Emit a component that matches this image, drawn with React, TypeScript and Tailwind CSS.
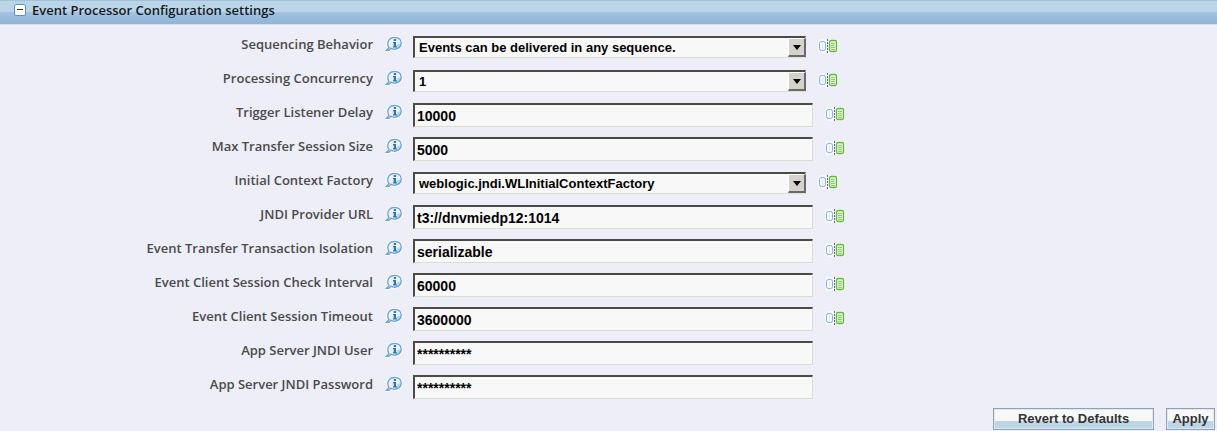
import React, { useState } from "react";

interface Setting {
  id: string;
  label: string;
  value: string;
  type: "select" | "text" | "password";
}

const settings: Setting[] = [
  { id: "sequencing", label: "Sequencing Behavior", value: "Events can be delivered in any sequence.", type: "select" },
  { id: "concurrency", label: "Processing Concurrency", value: "1", type: "select" },
  { id: "delay", label: "Trigger Listener Delay", value: "10000", type: "text" },
  { id: "sessionSize", label: "Max Transfer Session Size", value: "5000", type: "text" },
  { id: "contextFactory", label: "Initial Context Factory", value: "weblogic.jndi.WLInitialContextFactory", type: "select" },
  { id: "providerUrl", label: "JNDI Provider URL", value: "t3://dnvmiedp12:1014", type: "text" },
  { id: "isolation", label: "Event Transfer Transaction Isolation", value: "serializable", type: "text" },
  { id: "checkInterval", label: "Event Client Session Check Interval", value: "60000", type: "text" },
  { id: "timeout", label: "Event Client Session Timeout", value: "3600000", type: "text" },
  { id: "jndiUser", label: "App Server JNDI User", value: "**********", type: "password" },
  { id: "jndiPassword", label: "App Server JNDI Password", value: "**********", type: "password" },
];

const InfoIcon = () => (
  <svg width="18" height="16" viewBox="0 0 18 16" fill="none">
    <path d="M1.5 14.2 4 11.5C1 6.5 4.2 1.5 9.5 1.5c4 0 6.7 2.2 6.7 5.8s-2.6 5.9-6.4 5.9c-1.8 0-2.9-.3-4-1L4 14.2Z" fill="#e6f1fb" stroke="#fff" strokeWidth="3" />
    <path d="M10 13c4 0 6-2.5 6-6-2 0-5 2-6 6Z" fill="#b4d4f1" />
    <path d="M1.5 14.2 4 11.5C1 6.5 4.2 1.5 9.5 1.5c4 0 6.7 2.2 6.7 5.8s-2.6 5.9-6.4 5.9c-1.8 0-2.9-.3-4-1L4 14.2Z" stroke="#6ba4dc" strokeWidth="1.4" />
    <path d="M8.8 3h2.2v2H8.8zM8 6h3v4.2h.8v1.3H8v-1.3h.8V7.2H8z" fill="#3272b8" />
  </svg>
);

const CompareIcon = () => (
  <svg width="20" height="16" viewBox="0 0 20 16" fill="none">
    <rect x="0" y="1" width="20" height="14" rx="4" fill="#f6f8fb" />
    <rect x="1.5" y="3.5" width="6" height="9" rx="2" fill="#f4f9fe" stroke="#7fb2e0" />
    <path d="M4.5 5.5v5" stroke="#c3daef" strokeDasharray="1 1" />
    <path d="M9.5 1v14" stroke="#666" strokeDasharray="2 1" />
    <rect x="11.5" y="2.5" width="7" height="11" rx="1.5" fill="#e5f6da" stroke="#5fba35" strokeWidth="1.3" />
    <path d="M13 5.5h4M13 7.5h4M13 9.5h4M13 11.5h4" stroke="#8ecf70" />
  </svg>
);

const fieldClass =
  "block w-full appearance-none rounded-none border-t-2 border-l-2 border-r border-b border-t-[#4c4c46] border-l-[#4c4c46] border-r-[#d8dfce] border-b-[#d8dfce] bg-[#f8f8f8] font-bold text-black outline-none";

const SettingRow: React.FC<{ setting: Setting }> = ({ setting }) => {
  const [value, setValue] = useState<string>(setting.value);

  return (
    <div className="flex h-[34px] items-center">
      <label
        htmlFor={setting.id}
        className="w-[373px] shrink-0 pb-[6px] text-right text-[13px] leading-4 font-semibold text-[#4a4a4a]"
      >
        {setting.label}
      </label>
      <button type="button" aria-label={"About " + setting.label} className="mr-[10px] ml-3 shrink-0 pb-[6px]">
        <InfoIcon />
      </button>
      {setting.type === "select" ? (
        <div className="relative w-[393px] font-['Liberation_Sans',Arial,sans-serif]">
          <select
            id={setting.id}
            value={value}
            onChange={(e) => setValue(e.target.value)}
            className={fieldClass + " h-[22px] pl-1 text-[13px] leading-4"}
          >
            <option>{setting.value}</option>
          </select>
          <span className="pointer-events-none absolute top-[2px] right-0 flex h-[19px] w-[18px] items-center justify-center border-t border-r-2 border-b-2 border-l border-t-white border-r-[#6b6865] border-b-[#6b6865] border-l-white bg-[#d5d2cc]">
            <svg width="8" height="5" viewBox="0 0 8 5">
              <path d="M0 0h8L4 5z" fill="#000" />
            </svg>
          </span>
        </div>
      ) : (
        <div className="w-[400px] font-['Liberation_Sans',Arial,sans-serif]">
          <input
            id={setting.id}
            type="text"
            value={value}
            onChange={(e) => setValue(e.target.value)}
            className={fieldClass + " h-6 pl-[2px] text-[14px]"}
          />
        </div>
      )}
      {setting.type !== "password" && (
        <button type="button" aria-label={"Compare " + setting.label} className="ml-3 shrink-0 pb-[2px]">
          <CompareIcon />
        </button>
      )}
    </div>
  );
};

const actionClass =
  "h-[22px] border border-[#8fa3b3] bg-linear-to-b from-[#f8f8f8] from-60% to-[#bcd6e6] to-60% text-[13px] leading-4 font-bold text-[#333] shadow-[inset_0_0_0_1px_#dfe8ee]";

const App = () => {
  const [open, setOpen] = useState<boolean>(true);

  return (
    <div className="min-h-screen bg-[#eeeef8] font-['Open_Sans','Noto_Sans',Tahoma,sans-serif]">
      <div className="flex h-[25px] items-center border-t border-b border-t-[#9fc3dc] border-b-[#d5dfeb] bg-linear-to-b from-[#bad5e8] from-50% via-[#a2c4e0] via-50% to-[#8db3d8] pb-[6px] pl-[14px]">
        <button
          type="button"
          aria-label="Toggle section"
          onClick={() => setOpen(!open)}
          className="flex h-3 w-3 items-center justify-center rounded-[2px] border border-[#5d91c8] bg-white"
        >
          <span className="h-px w-[6px] bg-[#333]" />
        </button>
        <h2 className="ml-[6px] text-[13px] leading-4 font-semibold text-[#15191e]">
          Event Processor Configuration settings
        </h2>
      </div>
      {open && (
        <form onSubmit={(e) => e.preventDefault()}>
          <div className="pt-[5px]">
            {settings.map((setting) => (
              <SettingRow key={setting.id} setting={setting} />
            ))}
          </div>
          <div className="flex justify-end gap-3 pt-1 pr-[2px] font-['Liberation_Sans',Arial,sans-serif]">
            <button type="button" className={actionClass + " w-[161px]"}>
              Revert to Defaults
            </button>
            <button type="submit" className={actionClass + " w-[49px]"}>
              Apply
            </button>
          </div>
        </form>
      )}
    </div>
  );
};

export default App;
